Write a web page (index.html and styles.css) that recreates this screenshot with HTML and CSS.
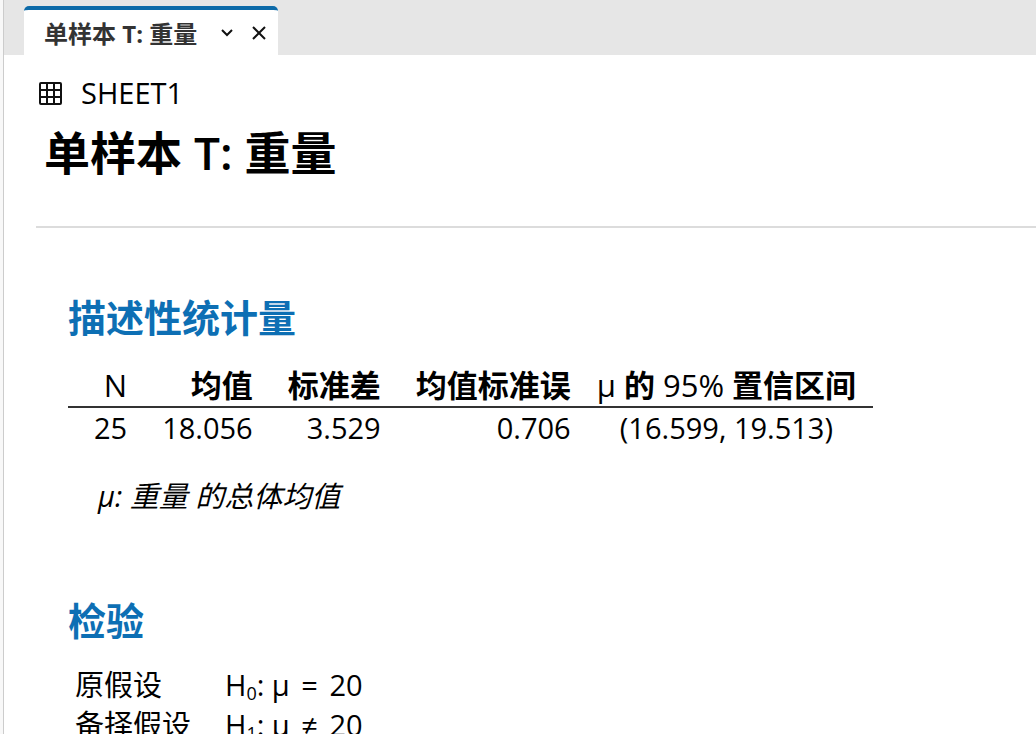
FILE: index.html
```html
<!DOCTYPE html>
<html lang="zh-CN">
<head>
  <meta charset="UTF-8">
  <meta name="viewport" content="width=device-width, initial-scale=1">
  <title>单样本 T: 重量</title>
  <link rel="stylesheet" href="styles.css">
</head>
<body>
  <div class="pane">
    <!-- Tab Bar -->
    <header class="tabs">
      <div class="tab">
        <span class="tab-title">单样本 <span class="latin">T:</span> 重量</span>
        <button type="button" class="tab-button" aria-label="菜单">
          <svg width="14" height="14" viewBox="0 0 14 14"><path d="M2 4l5 5 5-5"/></svg>
        </button>
        <button type="button" class="tab-button" aria-label="关闭">
          <svg width="14" height="14" viewBox="0 0 14 14"><path d="M1 1l12 12M13 1L1 13"/></svg>
        </button>
      </div>
    </header>

    <main class="output">
      <!-- Worksheet and Title -->
      <div class="heading">
        <div class="sheet">
          <svg width="27" height="26" viewBox="0 0 27 26"><rect x="4" y="3" width="21" height="21" rx="1"/><path d="M11 3v21M18 3v21M4 10h21M4 17h21"/></svg>
          <span>SHEET1</span>
        </div>
        <h1>单样本 <span class="latin">T:</span> 重量</h1>
      </div>

      <!-- Descriptive Statistics -->
      <section class="stats">
        <h2>描述性统计量</h2>
        <table class="stats-table">
          <thead>
            <tr>
              <th><span class="latin">N</span></th>
              <th>均值</th>
              <th>标准差</th>
              <th>均值标准误</th>
              <th class="interval"><span class="latin">μ</span> 的 <span class="latin">95%</span> 置信区间</th>
            </tr>
          </thead>
          <tbody>
            <tr>
              <td>25</td>
              <td>18.056</td>
              <td>3.529</td>
              <td>0.706</td>
              <td class="interval">(16.599, 19.513)</td>
            </tr>
          </tbody>
        </table>
        <p class="note">μ: 重量 的总体均值</p>
      </section>

      <!-- Test -->
      <section class="test">
        <h2>检验</h2>
        <table class="test-table">
          <tbody>
            <tr>
              <td>原假设</td>
              <td>H<sub>0</sub>: μ <span class="operator">=</span> 20</td>
            </tr>
            <tr>
              <td>备择假设</td>
              <td>H<sub>1</sub>: μ <span class="operator">≠</span> 20</td>
            </tr>
          </tbody>
        </table>
      </section>
    </main>
  </div>
</body>
</html>
```
FILE: styles.css
```css
/* Reset & Base Styles */
* { box-sizing: border-box; margin: 0; padding: 0; }
html, body { height: 100%; }
body {
  font-family: "Open Sans", "Noto Sans CJK SC", sans-serif;
  font-size: 29px;
  line-height: 40px;
  background: #f8f8f8;
  color: #000;
  overflow: hidden;
}
svg {
  display: block;
  fill: none;
  stroke: #111;
  stroke-width: 2;
}

.pane {
  min-height: 100%;
  margin-left: 3px;
  border-left: 1px solid #ccc;
  background: #fff;
}

/* Tab Bar */
.tabs {
  display: flex;
  padding: 6px 20px 0;
  background: #e6e6e6;
}
.tab {
  display: flex;
  align-items: center;
  gap: 18px;
  height: 49px;
  padding: 0 12px 0 20px;
  border-top: 4px solid #0d6aa8;
  border-radius: 5px 5px 0 0;
  background: #fff;
}
.tab-title {
  padding: 3px 5px 0 0;
  font-size: 24px;
  font-weight: 600;
  color: #333;
}
.tab-title .latin { font-weight: 700; }
.tab-button {
  border: none;
  background: none;
  cursor: pointer;
}

/* Worksheet and Title */
.heading {
  margin-left: 32px;
  padding: 18px 0 42px;
  border-bottom: 2px solid #dcdcdc;
}
.sheet {
  display: flex;
  align-items: center;
  gap: 18px;
}
h1 {
  margin: 7px 0 0 8px;
  font-size: 46px;
  line-height: 64px;
}
h1 .latin { font-weight: 600; }

/* Sections */
section { padding-left: 64px; }
h2 {
  font-size: 38px;
  line-height: 54px;
  color: #0d6fb4;
}
table { border-collapse: collapse; }

/* Descriptive Statistics */
.stats { padding-top: 62px; }
.stats-table { margin-top: 20px; }
.stats-table th,
.stats-table td {
  padding: 0 9px 0 26px;
  text-align: right;
  white-space: nowrap;
}
.stats-table th {
  height: 43px;
  font-size: 31px;
  border-bottom: 2px solid #333;
}
.stats-table th .latin { font-weight: 400; }
.stats-table .interval {
  padding: 0 17px;
  text-align: center;
}
.note {
  margin: 28px 0 0 30px;
  font-style: italic;
}

/* Test */
.test { padding-top: 77px; }
.test-table { margin-top: 18px; }
.test-table td { padding: 0 27px 0 7px; }
.operator { margin: 0 4px; }
sub {
  font-size: 18px;
  line-height: 0;
  vertical-align: -4px;
}
```
